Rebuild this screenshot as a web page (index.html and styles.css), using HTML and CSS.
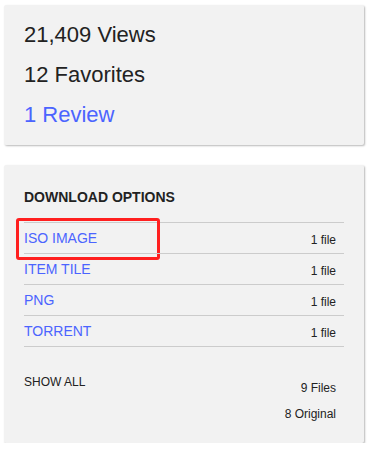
FILE: index.html
```html
<!DOCTYPE html>
<html lang="en">
<head>
  <meta charset="UTF-8" />
  <meta name="viewport" content="width=device-width, initial-scale=1.0"/>
  <title>Item stats</title>
  <link rel="stylesheet" href="styles.css">
</head>
<body>
  <!-- Статистика -->
  <div class="card stats">
    <p>21,409 Views</p>
    <p>12 Favorites</p>
    <p><a href="#reviews">1 Review</a></p>
  </div>

  <!-- Загрузки -->
  <div class="card downloads">
    <h3>DOWNLOAD OPTIONS</h3>
    <ul class="formats">
      <li class="marked"><a href="#">ISO IMAGE</a><span class="count">1 file</span></li>
      <li><a href="#">ITEM TILE</a><span class="count">1 file</span></li>
      <li><a href="#">PNG</a><span class="count">1 file</span></li>
      <li><a href="#">TORRENT</a><span class="count">1 file</span></li>
    </ul>
    <div class="show-all">
      <a href="#" class="all-link">SHOW ALL</a>
      <div class="totals">
        <span>9 Files</span>
        <span>8 Original</span>
      </div>
    </div>
  </div>
</body>
</html>
```

FILE: styles.css
```css
* { box-sizing: border-box; }
body {
  font-family: 'Liberation Sans', Arial, sans-serif;
  margin: 0;
  background: white;
  padding: 5px 6px 0 4px;
  color: #222;
}
a {
  color: #4b64ff;
  text-decoration: none;
}
.card {
  background: #f2f2f2;
  border-radius: 2px;
  box-shadow: 1px 1px 2px rgba(0,0,0,0.28);
  padding: 10px 20px;
}
.stats p {
  margin: 0;
  font-size: 22px;
  line-height: 40px;
}
.downloads {
  margin-top: 20px;
  padding: 20px 20px 16px;
}
.downloads h3 {
  margin: 0 0 13px;
  font-size: 14px;
  line-height: 24px;
  font-weight: bold;
}
.formats {
  list-style: none;
  margin: 0;
  padding: 0;
  border-bottom: 1px solid #ccc;
}
.formats li {
  display: flex;
  justify-content: space-between;
  border-top: 1px solid #ccc;
  padding-right: 8px;
  position: relative;
}
.formats a {
  font-size: 14px;
  line-height: 30px;
}
.count {
  font-size: 12px;
  line-height: 26px;
  padding-top: 4px;
}
.marked::after {
  content: "";
  position: absolute;
  left: -8px;
  top: -5px;
  width: 138px;
  height: 36px;
  border: 3px solid #ff1f1f;
  border-radius: 3px;
}
.show-all {
  display: flex;
  justify-content: space-between;
  align-items: flex-start;
  margin-top: 28px;
  padding-right: 8px;
}
.all-link {
  color: #222;
  font-size: 12px;
  line-height: 14px;
}
.totals {
  display: flex;
  flex-direction: column;
  align-items: flex-end;
  font-size: 12px;
  line-height: 26px;
}
```
